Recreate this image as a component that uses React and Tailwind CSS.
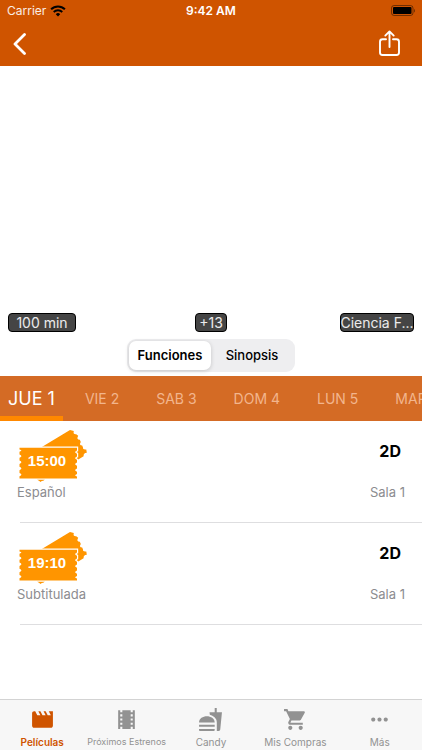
import { useState } from "react";
import {
  MdMovie,
  MdTheaters,
  MdFastfood,
  MdShoppingCart,
  MdMoreHoriz,
} from "react-icons/md";

const chips = ["100 min", "+13", "Ciencia F..."];
const days = ["JUE 1", "VIE 2", "SAB 3", "DOM 4", "LUN 5", "MAR 6"];
const showings = [
  { time: "15:00", language: "Español", format: "2D", room: "Sala 1" },
  { time: "19:10", language: "Subtitulada", format: "2D", room: "Sala 1" },
];
const tabs = [
  { label: "Películas", Icon: MdMovie, text: "text-[10px] font-semibold" },
  { label: "Próximos Estrenos", Icon: MdTheaters, text: "text-[9px]" },
  { label: "Candy", Icon: MdFastfood, text: "text-[10px]" },
  { label: "Mis Compras", Icon: MdShoppingCart, text: "text-[10px]" },
  { label: "Más", Icon: MdMoreHoriz, text: "text-[10px]" },
];

function StatusBar() {
  return (
    <div className="grid h-[22px] grid-cols-3 items-center px-[7px] text-[12px] leading-4 text-white">
      <div className="flex items-center gap-1">
        <span className="text-white/90">Carrier</span>
        <svg width="16" height="12" viewBox="0 0 16 12" fill="none" stroke="#000" aria-hidden="true">
          <path d="M1.1 4.3a9.8 9.8 0 0 1 13.8 0" strokeWidth="2" />
          <path d="M3.7 7a6.1 6.1 0 0 1 8.6 0" strokeWidth="1.8" />
          <path d="M8 11.4 5.8 9.2a3.1 3.1 0 0 1 4.4 0Z" fill="#000" stroke="none" />
        </svg>
      </div>
      <span className="text-center font-semibold">9:42 AM</span>
      <svg className="justify-self-end" width="24" height="12" viewBox="0 0 24 12" aria-hidden="true">
        <rect x=".5" y=".5" width="21.500" height="10" rx="2.6" fill="none" stroke="#000" strokeOpacity=".45" />
        <rect x="2" y="2" width="18.500" height="7" rx="1" fill="#000" />
        <path d="M23 4v3.400c1.200-.4 1.200-3 0-3.400Z" fill="#000" fillOpacity=".5" />
      </svg>
    </div>
  );
}

function Ticket({ time }) {
  return (
    <div className="relative h-[52px] w-[70px]">
      <svg width="70" height="52" viewBox="0 0 70 52" fill="#ff9500" aria-hidden="true">
        <path d="M22 17.500 51 0 54.800 1Q53.800 4.500 57.200 4.200L59.200 5.700Q57 9.600 60.800 9.800L61.800 12Q59.600 15.200 63.200 15.600L64 17.600Q63.600 20 67.300 19.500L67.800 22.800Q64.300 22.800 64.600 26.300L56 31.500 45 30Z" />
        <path d="M18 49.500h8l-1.700 1.200-1.600.2-1 1.100-1.800-1.200Z" />
        <path
          d="M.5 17.700H58V20.400Q54.400 22 58 23.700V26.500Q54.400 28.200 58 29.800V32.500Q54.400 34.200 58 35.800V38.500Q54.400 40.200 58 41.800V44Q54.400 45.500 58 46.400V48.400H.5V46.300Q4.300 44.700.5 43V40.200Q4.300 38.500.5 36.800V34Q4.300 32.300.5 30.600V27.800Q4.300 26.100.5 24.400V21.800Q4.300 20.500.5 19.600Z"
          stroke="#fff"
          strokeWidth="2.4"
          paintOrder="stroke"
        />
      </svg>
      <span className="absolute inset-x-0 top-[21px] w-14 text-center font-['Liberation_Sans',Arial,sans-serif] text-[15px] leading-5 font-bold text-white">
        {time}
      </span>
    </div>
  );
}

export default function App() {
  const [view, setView] = useState("Funciones");
  const [day, setDay] = useState("JUE 1");

  return (
    <div className="flex min-h-screen flex-col bg-white font-[Inter,sans-serif] text-black">
      <header className="bg-[#cf5400]">
        <StatusBar />
        <div className="flex h-11 items-center justify-between pr-5 pl-3">
          <button type="button" aria-label="Volver">
            <svg width="15" height="22" viewBox="0 0 15 22" fill="none" stroke="#fff" strokeWidth="2.8" aria-hidden="true">
              <path d="M12.500 1.500 3 11l9.500 9.500" strokeLinecap="round" strokeLinejoin="round" />
            </svg>
          </button>
          <button type="button" aria-label="Compartir">
            <svg width="24" height="28" viewBox="0 0 24 28" fill="none" stroke="#fff" strokeWidth="1.9" strokeLinecap="round" strokeLinejoin="round" aria-hidden="true">
              <path d="M8 9.200H4.500Q2 9.200 2 11.700V22.500Q2 25 4.500 25H18.500Q21 25 21 22.500V11.700Q21 9.200 18.500 9.200H15" />
              <path d="M11.500 17V1.800M7.300 5.600l4.200-4.200 4.200 4.200" />
            </svg>
          </button>
        </div>
      </header>

      <main className="flex-1">
        <section className="grid h-[266px] grid-cols-3 content-end justify-items-center px-2" aria-label="Datos de la película">
          {chips.map((chip) => (
            <span
              key={chip}
              className="flex h-[19px] min-w-8 items-center justify-center rounded-[4px] border border-black bg-[#454545] text-[14px] leading-[17px] whitespace-nowrap text-white/90 first:w-[68px] first:justify-self-start last:w-[74px] last:justify-self-end"
            >
              {chip}
            </span>
          ))}
        </section>

        <div className="flex justify-center pt-[7px] pb-1">
          <div className="grid h-[33px] w-[168px] grid-cols-2 rounded-[9px] bg-[#eeeef0] p-[2px] text-[13px]">
            {["Funciones", "Sinopsis"].map((name) => (
              <button
                key={name}
                type="button"
                aria-pressed={view === name}
                onClick={() => setView(name)}
                className={
                  view === name
                    ? "rounded-[7px] bg-white font-semibold shadow-[0_1px_4px_rgba(0,0,0,0.18)]"
                    : "font-medium"
                }
              >
                {name}
              </button>
            ))}
          </div>
        </div>

        <nav className="flex h-[45px] gap-px overflow-hidden bg-[#d46b25] whitespace-nowrap" aria-label="Días">
          {days.map((name) => (
            <button
              key={name}
              type="button"
              onClick={() => setDay(name)}
              className={
                day === name
                  ? "mr-[3px] shrink-0 border-y-[5px] border-t-transparent border-b-[#ff8800] px-2 text-[18px] text-white"
                  : "shrink-0 px-[18px] text-[14px] text-[#f2b58d]"
              }
            >
              {name}
            </button>
          ))}
        </nav>

        <ul>
          {showings.map((show) => (
            <li key={show.time}>
              <div className="flex h-[101px] justify-between pt-[9px] pr-[17px] pl-[17px]">
                <div className="flex flex-col gap-[2px]">
                  <div className="pl-[2px]">
                    <Ticket time={show.time} />
                  </div>
                  <span className="text-[13px] leading-4 text-[#8c8c90]">{show.language}</span>
                </div>
                <div className="flex flex-col items-end gap-6 pt-3">
                  <strong className="pr-1 text-[16px] leading-[18px] font-bold">{show.format}</strong>
                  <span className="text-[13px] leading-4 text-[#8c8c90]">{show.room}</span>
                </div>
              </div>
              <div className="ml-5 h-px bg-[#dedee0]" />
            </li>
          ))}
        </ul>
      </main>

      <nav className="grid h-[51px] grid-cols-5 border-t border-[#d3d3d3] bg-[#f7f7f7]" aria-label="Principal">
        {tabs.map(({ label, Icon, text }, i) => (
          <a
            key={label}
            href="#"
            aria-current={i === 0 ? "page" : undefined}
            className={`flex flex-col items-center gap-[3px] pt-[7px] whitespace-nowrap ${text} ${i === 0 ? "text-[#cf5400]" : "text-[#929292]"}`}
          >
            <Icon size={25} aria-hidden="true" />
            <span className="leading-[14px]">{label}</span>
          </a>
        ))}
      </nav>
    </div>
  );
}
